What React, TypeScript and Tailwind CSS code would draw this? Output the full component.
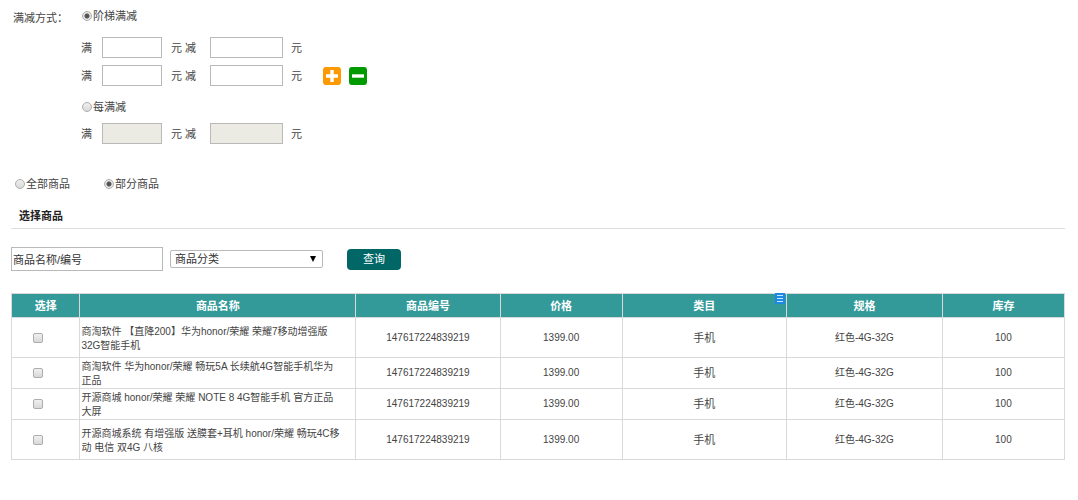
import { useState } from "react";
import type { ReactNode } from "react";

type Product = {
  id: number;
  name: string;
  code: string;
  price: string;
  category: string;
  spec: string;
  stock: number;
  rowClass: string;
};

const products: Product[] = [
  {
    id: 1,
    name: "商淘软件 【直降200】华为honor/荣耀 荣耀7移动增强版\n32G智能手机",
    code: "147617224839219",
    price: "1399.00",
    category: "手机",
    spec: "红色-4G-32G",
    stock: 100,
    rowClass: "h-10"
  },
  {
    id: 2,
    name: "商淘软件 华为honor/荣耀 畅玩5A 长续航4G智能手机华为\n正品",
    code: "147617224839219",
    price: "1399.00",
    category: "手机",
    spec: "红色-4G-32G",
    stock: 100,
    rowClass: "h-[31px]"
  },
  {
    id: 3,
    name: "开源商城 honor/荣耀 荣耀 NOTE 8 4G智能手机 官方正品\n大屏",
    code: "147617224839219",
    price: "1399.00",
    category: "手机",
    spec: "红色-4G-32G",
    stock: 100,
    rowClass: "h-[31px]"
  },
  {
    id: 4,
    name: "开源商城系统 有增强版 送膜套+耳机 honor/荣耀 畅玩4C移\n动 电信 双4G 八核",
    code: "147617224839219",
    price: "1399.00",
    category: "手机",
    spec: "红色-4G-32G",
    stock: 100,
    rowClass: "h-10"
  }
];

const headCell = "border border-[#d9d9d9] p-0 text-center font-bold";
const bodyCell = "border border-[#d9d9d9] p-0 text-center";

function Radio({
  name,
  label,
  checked,
  onChange
}: {
  name: string;
  label: string;
  checked: boolean;
  onChange: () => void;
}) {
  return (
    <label className="inline-flex h-4 items-center gap-px">
      <input
        type="radio"
        name={name}
        checked={checked}
        onChange={onChange}
        className="size-2.5 shrink-0 appearance-none rounded-full border border-[#adadad] bg-[linear-gradient(#f0f0f0,#d8d8d8)] checked:bg-[radial-gradient(circle,#555_0_2px,#e6e6e6_3px)]"
      />
      {label}
    </label>
  );
}

function AmountRow({ disabled = false, children }: { disabled?: boolean; children?: ReactNode }) {
  const inputClass =
    "h-[21px] border border-[#b9b9b9] bg-white px-1 outline-none disabled:bg-[#ebebe4]";

  return (
    <div className="flex items-center">
      <span>满</span>
      <input type="text" aria-label="满金额" disabled={disabled} className={`${inputClass} ml-2.5 w-15`} />
      <span className="ml-[9px]">元 减</span>
      <input type="text" aria-label="减金额" disabled={disabled} className={`${inputClass} ml-3.5 w-[73px]`} />
      <span className="ml-2">元</span>
      {children}
    </div>
  );
}

export default function App() {
  const [mode, setMode] = useState("ladder");
  const [scope, setScope] = useState("part");

  return (
    <main className="bg-white pl-[11px] pr-[13px] pt-2 font-['Liberation_Sans','Noto_Sans_CJK_SC',sans-serif] text-[11px] leading-4 text-[#444]">
      <section className="flex">
        <div className="w-[70px] shrink-0 pl-0.5 pt-0.5">满减方式：</div>
        <div>
          <div className="flex pl-px">
            <Radio name="mode" label="阶梯满减" checked={mode === "ladder"} onChange={() => setMode("ladder")} />
          </div>
          <div className="mt-[13px] flex flex-col gap-[7px]">
            <AmountRow disabled={mode !== "ladder"} />
            <AmountRow disabled={mode !== "ladder"}>
              <button type="button" aria-label="添加" className="ml-[21px] size-[18px] rounded-[3px] bg-[#ff9900]">
                <svg viewBox="0 0 18 18" className="size-full" stroke="#fff" strokeWidth="3.4">
                  <path d="M3 9h12M9 3v12" />
                </svg>
              </button>
              <button type="button" aria-label="删除" className="ml-2 size-[18px] rounded-[3px] bg-[#009900]">
                <svg viewBox="0 0 18 18" className="size-full" stroke="#fff" strokeWidth="3.4">
                  <path d="M3 9h12" />
                </svg>
              </button>
            </AmountRow>
          </div>
          <div className="mt-[13px] flex pl-px">
            <Radio name="mode" label="每满减" checked={mode === "every"} onChange={() => setMode("every")} />
          </div>
          <div className="mt-2">
            <AmountRow disabled={mode !== "every"} />
          </div>
        </div>
      </section>

      <div className="mt-8 flex gap-[34px] pl-1">
        <Radio name="scope" label="全部商品" checked={scope === "all"} onChange={() => setScope("all")} />
        <Radio name="scope" label="部分商品" checked={scope === "part"} onChange={() => setScope("part")} />
      </div>

      <h2 className="mt-4 border-b border-[#dedede] pb-1 pl-2 text-[11px] font-bold text-[#222]">选择商品</h2>

      <form className="mt-[18px] flex items-center" onSubmit={(e) => e.preventDefault()}>
        <input
          type="text"
          aria-label="商品名称/编号"
          defaultValue="商品名称/编号"
          className="h-6 w-[152px] border border-[#b9b9b9] px-px text-[#333] outline-none"
        />
        <div className="relative ml-[7px]">
          <select
            aria-label="商品分类"
            className="block h-[18px] w-[153px] appearance-none rounded-xs border border-[#b9b9b9] bg-white px-1 leading-4 text-[#333]"
          >
            <option>商品分类</option>
          </select>
          <svg viewBox="0 0 6 6" className="pointer-events-none absolute right-[7px] top-1.5 size-1.5" fill="#000">
            <path d="M0 0h6L3 6z" />
          </svg>
        </div>
        <button type="submit" className="ml-6 h-[21px] w-[54px] rounded bg-[#006666] text-white">
          查询
        </button>
      </form>

      <table className="mt-[22px] w-full table-fixed border-collapse text-[10px]">
        <colgroup>
          <col className="w-[6.5%]" />
          <col className="w-[26.2%]" />
          <col className="w-[13.7%]" />
          <col className="w-[11.6%]" />
          <col className="w-[15.6%]" />
          <col className="w-[14.8%]" />
          <col className="w-[11.6%]" />
        </colgroup>
        <thead className="bg-[#339999] text-[11px] text-white">
          <tr className="h-6">
            <th className={headCell}>选择</th>
            <th className={headCell}>商品名称</th>
            <th className={headCell}>商品编号</th>
            <th className={headCell}>价格</th>
            <th className={`${headCell} relative`}>
              类目
              <svg viewBox="0 0 10 11" className="absolute right-px -top-px h-[11px] w-2.5">
                <path fill="#1e88e5" d="M0 0h10v11H0z" />
                <path stroke="#cfe8ff" d="M2 2.5h6M2 5.5h6M2 8.5h6" />
              </svg>
            </th>
            <th className={headCell}>规格</th>
            <th className={headCell}>库存</th>
          </tr>
        </thead>
        <tbody>
          {products.map((product) => (
            <tr key={product.id} className={product.rowClass}>
              <td className={`${bodyCell} pr-4`}>
                <input
                  type="checkbox"
                  aria-label={product.name}
                  className="block mx-auto size-2.5 appearance-none rounded-xs border border-[#adadad] bg-[linear-gradient(#f0f0f0,#d8d8d8)] checked:bg-[#555]"
                />
              </td>
              <td className="whitespace-pre border border-[#d9d9d9] p-0 pl-px pt-0.5 text-left leading-[14px]">
                {product.name}
              </td>
              <td className={bodyCell}>{product.code}</td>
              <td className={bodyCell}>{product.price}</td>
              <td className={`${bodyCell} text-[11px]`}>{product.category}</td>
              <td className={bodyCell}>{product.spec}</td>
              <td className={bodyCell}>{product.stock}</td>
            </tr>
          ))}
        </tbody>
      </table>
    </main>
  );
}
